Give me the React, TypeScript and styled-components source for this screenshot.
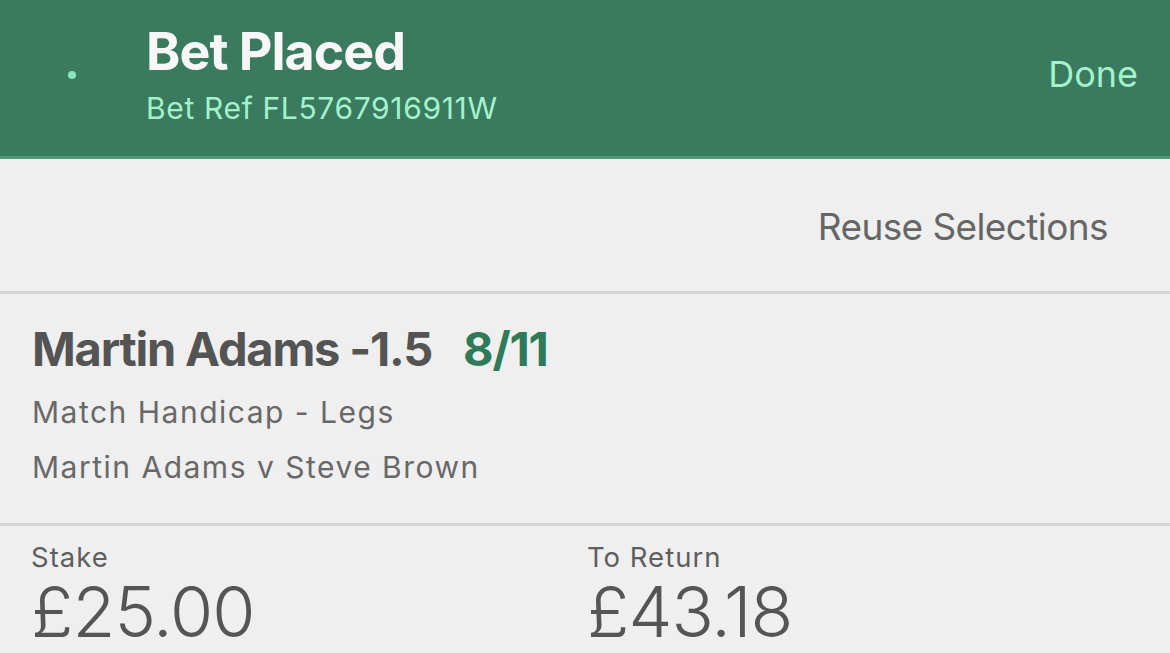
import React from 'react'
import styled, { createGlobalStyle } from 'styled-components'

const GlobalStyle = createGlobalStyle`
  html, body {
    margin: 0;
    padding: 0;
    background: #efefef;
    font-family: Inter, "Noto Sans", sans-serif;
    overflow: hidden;
  }
`

const Header = styled.header`
  display: flex;
  align-items: flex-start;
  height: 156px;
  padding: 0 32px 0 68px;
  background: #3a7a5e;
  border-bottom: 3px solid #4f9978;
`

const Dot = styled.span`
  width: 8px;
  height: 8px;
  margin-top: 71px;
  border-radius: 50%;
  background: #86e6bb;
  flex-shrink: 0;
`

const TitleBlock = styled.div`
  display: flex;
  flex-direction: column;
  margin-left: 70px;
  padding-top: 26px;
  flex: 1;
`

const Title = styled.h1`
  margin: 0;
  font-size: 52px;
  line-height: 52px;
  font-weight: 700;
  color: #f7f7f7;
  letter-spacing: -1px;
`

const Ref = styled.div`
  margin-top: 15px;
  font-size: 30px;
  line-height: 30px;
  color: #a3f2cb;
  letter-spacing: 0.65px;
`

const Done = styled.button`
  margin-top: 56px;
  padding: 0;
  border: 0;
  background: none;
  font-family: inherit;
  font-size: 36px;
  line-height: 36px;
  color: #a3f2cb;
`

const Section = styled.section<{ $pt: number; $pb: number }>`
  padding: ${({ $pt }) => $pt}px 32px ${({ $pb }) => $pb}px 32px;
  border-bottom: 3px solid #d4d4d4;
`

const ActionRow = styled(Section)`
  display: flex;
  justify-content: flex-end;
  padding-right: 62px;
`

const Reuse = styled.button`
  padding: 0;
  border: 0;
  background: none;
  font-family: inherit;
  font-size: 37px;
  line-height: 37px;
  color: #666666;
  letter-spacing: -0.6px;
`

const Selection = styled.div`
  display: flex;
  align-items: baseline;
  gap: 31px;
  font-size: 47px;
  line-height: 47px;
  font-weight: 700;
  color: #545454;
  letter-spacing: -1.2px;
`

const Odds = styled.span`
  color: #2e7a59;
`

const Detail = styled.div`
  margin-top: 25px;
  font-size: 30px;
  line-height: 30px;
  color: #686868;
  letter-spacing: 1.5px;
`

const Totals = styled.div`
  display: grid;
  grid-template-columns: 556px 1fr;
  padding: 18px 31px 0;
`

const Label = styled.div`
  font-size: 27.5px;
  line-height: 27.5px;
  color: #5e5e5e;
  letter-spacing: 1px;
`

const Amount = styled.div`
  margin-top: 5px;
  font-size: 70px;
  line-height: 70px;
  font-weight: 300;
  color: #555555;
  letter-spacing: -1px;
`

const Total = ({ label, amount }: { label: string; amount: string }) => (
  <div>
    <Label>{label}</Label>
    <Amount>{amount}</Amount>
  </div>
)

const App = () => (
  <>
    <GlobalStyle />
    <Header>
      <Dot />
      <TitleBlock>
        <Title>Bet Placed</Title>
        <Ref>Bet Ref FL5767916911W</Ref>
      </TitleBlock>
      <Done>Done</Done>
    </Header>
    <ActionRow $pt={49} $pb={46}>
      <Reuse>Reuse Selections</Reuse>
    </ActionRow>
    <Section $pt={31} $pb={41}>
      <Selection>
        <span>Martin Adams -1.5</span>
        <Odds>8/11</Odds>
      </Selection>
      <Detail>Match Handicap - Legs</Detail>
      <Detail>Martin Adams v Steve Brown</Detail>
    </Section>
    <Totals>
      <Total label="Stake" amount="£25.00" />
      <Total label="To Return" amount="£43.18" />
    </Totals>
  </>
)

export default App
